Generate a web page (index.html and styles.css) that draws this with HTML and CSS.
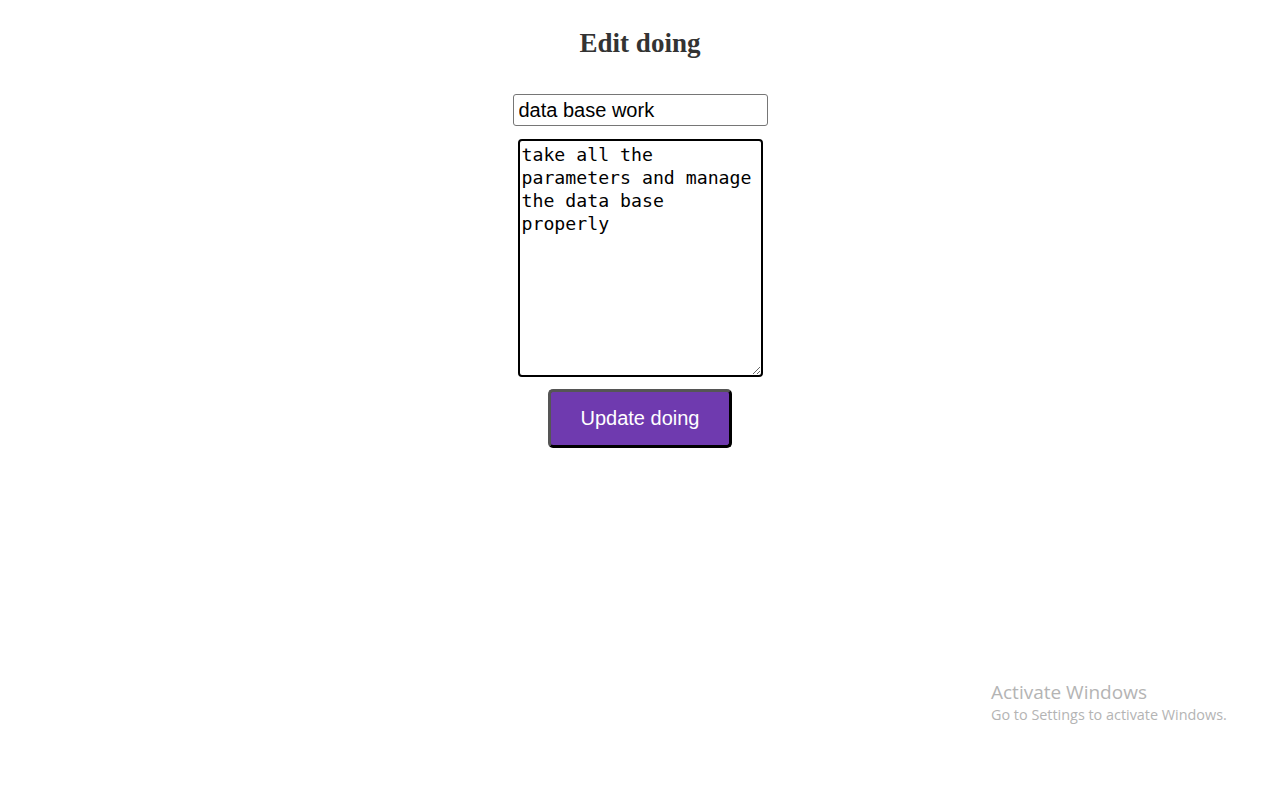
FILE: index.html
```html
<!DOCTYPE html>
<html lang="en">
<head>
<meta charset="utf-8">
<title>Edit doing</title>
<link rel="stylesheet" href="styles.css">
</head>
<body>
<main class="page">
  <h1 class="title">Edit doing</h1>
  <form class="edit-form">
    <input class="field-title" type="text" value="data base work">
    <textarea class="field-desc">take all the parameters and manage the data base properly</textarea>
    <button class="btn-update" type="button">Update doing</button>
  </form>
</main>
<div class="watermark">
  <div class="wm-title">Activate Windows</div>
  <div class="wm-sub">Go to Settings to activate Windows.</div>
</div>
</body>
</html>
```
FILE: styles.css
```css
html, body {
  margin: 0;
  padding: 0;
  background: #fff;
}
body {
  width: 1280px;
  height: 800px;
  overflow: hidden;
  font-family: "Liberation Sans", Arial, sans-serif;
}
.page {
  display: flex;
  flex-direction: column;
  align-items: center;
}
.title {
  font-family: "Liberation Serif", "Times New Roman", serif;
  font-weight: bold;
  font-size: 27px;
  line-height: 30px;
  color: #333;
  margin: 28px 0 36px;
}
.edit-form {
  display: flex;
  flex-direction: column;
  align-items: center;
}
.field-title {
  box-sizing: border-box;
  width: 255px;
  height: 32px;
  border: 1px solid #767676;
  border-radius: 3px;
  padding: 0 5px;
  font-family: "Liberation Sans", Arial, sans-serif;
  font-size: 20px;
  color: #000;
  margin: 0 0 13px;
}
.field-desc {
  box-sizing: border-box;
  width: 245px;
  height: 238px;
  border: 2px solid #000;
  border-radius: 4px;
  padding: 2px 2px;
  font-family: "DejaVu Sans Mono", "Liberation Mono", monospace;
  font-size: 18.2px;
  line-height: 23px;
  color: #000;
  margin: 0 0 12px;
  resize: both;
}
.btn-update {
  box-sizing: border-box;
  width: 184px;
  height: 59px;
  background: #6f3aaf;
  color: #fff;
  font-family: "Liberation Sans", Arial, sans-serif;
  font-size: 20px;
  border: 3px solid;
  border-color: #555 #000 #000 #555;
  border-radius: 5px;
  padding: 0;
  cursor: pointer;
}
.watermark {
  position: absolute;
  left: 991px;
  top: 680px;
  color: #b4b4b4;
  font-family: "Open Sans", "Noto Sans", sans-serif;
}
.wm-title {
  font-size: 19px;
  line-height: 24px;
}
.wm-sub {
  font-size: 14.4px;
  line-height: 21px;
}
```
